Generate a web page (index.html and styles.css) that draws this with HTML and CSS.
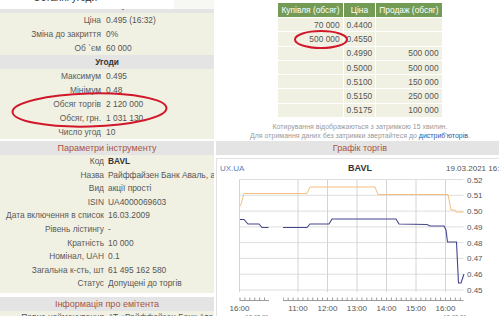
FILE: index.html
```html
<!DOCTYPE html>
<html lang="uk">
<head>
<meta charset="utf-8">
<title>BAVL</title>
<link rel="stylesheet" href="styles.css">
</head>
<body>
<div class="page">
  <div class="left-top">
    <div class="tabbar"><span class="tab"><span class="tab-text">Останні угоди</span></span><span class="tab-rest"></span></div>
    <div class="cuthead"><span class="cuthead-text">Поточні торги</span></div>
    <div class="sec">
      <div class="row"><span class="k">Ціна</span><span class="v">0.495 (16:32)</span></div>
      <div class="row"><span class="k">Зміна до закриття</span><span class="v">0%</span></div>
      <div class="row"><span class="k">Об `єм</span><span class="v">60 000</span></div>
      <div class="subhead">Угоди</div>
      <div class="row"><span class="k">Максимум</span><span class="v">0.495</span></div>
      <div class="row"><span class="k">Мінімум</span><span class="v">0.48</span></div>
      <div class="row"><span class="k">Обсяг торгів</span><span class="v">2 120 000</span></div>
      <div class="row"><span class="k">Обсяг, грн.</span><span class="v">1 031 130</span></div>
      <div class="row"><span class="k">Число угод</span><span class="v">10</span></div>
    </div>
  </div>

  <div class="right-top">
    <table class="book">
      <thead>
        <tr><th class="c-buy">Купівля (обсяг)</th><th class="c-price">Ціна</th><th class="c-sell">Продаж (обсяг)</th></tr>
      </thead>
      <tbody>
        <tr><td class="num">70 000</td><td>0.4400</td><td class="num"></td></tr>
        <tr><td class="num">500 000</td><td>0.4550</td><td class="num"></td></tr>
        <tr><td class="num"></td><td>0.4990</td><td class="num">500 000</td></tr>
        <tr><td class="num"></td><td>0.5000</td><td class="num">500 000</td></tr>
        <tr><td class="num"></td><td>0.5100</td><td class="num">150 000</td></tr>
        <tr><td class="num"></td><td>0.5150</td><td class="num">250 000</td></tr>
        <tr><td class="num"></td><td>0.5175</td><td class="num">100 000</td></tr>
      </tbody>
    </table>
    <p class="note">Котирування відображаються з затримкою 15 хвилин.<br>Для отримання даних без затримки звертайтеся до <a class="link">дистриб'юторів</a>.</p>
  </div>

  <div class="left-bottom">
    <div class="head">Параметри інструменту</div>
    <div class="sec params">
      <div class="row"><span class="k">Код</span><span class="v strong">BAVL</span></div>
      <div class="row"><span class="k">Назва</span><span class="v">Райффайзен Банк Аваль, акції</span></div>
      <div class="row"><span class="k">Вид</span><span class="v">акції прості</span></div>
      <div class="row"><span class="k">ISIN</span><span class="v">UA4000069603</span></div>
      <div class="row"><span class="k">Дата включення в список</span><span class="v">16.03.2009</span></div>
      <div class="row"><span class="k">Рівень лістингу</span><span class="v">-</span></div>
      <div class="row"><span class="k">Кратність</span><span class="v">10 000</span></div>
      <div class="row"><span class="k">Номінал, UAH</span><span class="v">0.1</span></div>
      <div class="row"><span class="k">Загальна к-сть, шт</span><span class="v">61 495 162 580</span></div>
      <div class="row"><span class="k">Статус</span><span class="v">Допущені до торгів</span></div>
    </div>
    <div class="head">Інформація про емітента</div>
    <div class="sec params">
      <div class="row"><span class="k">Повне найменування</span><span class="v">АТ «Райффайзен Банк Аваль»</span></div>
    </div>
  </div>

  <div class="right-bottom">
    <div class="head">Графік торгів</div>
    <div class="chart">
      <svg class="chart-svg" width="288" height="160" viewBox="217 159 288 160" xmlns="http://www.w3.org/2000/svg">
        <defs>
          <pattern id="tk1" patternUnits="userSpaceOnUse" x="239.5" y="0" width="4.9167" height="400">
            <line x1="0.5" y1="297.5" x2="0.5" y2="300" stroke="#9a9a9a" stroke-width="1"/>
          </pattern>
          <pattern id="tk2" patternUnits="userSpaceOnUse" x="297.5" y="0" width="4.9167" height="400">
            <line x1="0.5" y1="297.5" x2="0.5" y2="300" stroke="#9a9a9a" stroke-width="1"/>
          </pattern>
        </defs>
        <text class="t-src" x="220" y="171">UX.UA</text>
        <text class="t-title" x="360" y="171" text-anchor="middle">BAVL</text>
        <text class="t-date" x="446" y="171">19.03.2021 16:52</text>

        <g class="hgrid">
          <line x1="239.5" y1="179.5" x2="463.5" y2="179.5"/>
          <line x1="239.5" y1="195.3" x2="463.5" y2="195.3"/>
          <line x1="239.5" y1="211.1" x2="463.5" y2="211.1"/>
          <line x1="239.5" y1="226.9" x2="463.5" y2="226.9"/>
          <line x1="239.5" y1="242.6" x2="463.5" y2="242.6"/>
          <line x1="239.5" y1="258.4" x2="463.5" y2="258.4"/>
          <line x1="239.5" y1="274.2" x2="463.5" y2="274.2"/>
          <line x1="239.5" y1="290" x2="463.5" y2="290"/>
        </g>
        <g class="vgrid">
          <line x1="239.5" y1="179.5" x2="239.5" y2="292"/>
          <line x1="298" y1="179.5" x2="298" y2="292"/>
          <line x1="327.5" y1="179.5" x2="327.5" y2="292"/>
          <line x1="357" y1="179.5" x2="357" y2="292"/>
          <line x1="386.5" y1="179.5" x2="386.5" y2="292"/>
          <line x1="416" y1="179.5" x2="416" y2="292"/>
          <line x1="445.5" y1="179.5" x2="445.5" y2="292"/>
        </g>

        <g class="ylab">
          <text x="467" y="182.5">0.52</text>
          <text x="467" y="198.3">0.51</text>
          <text x="467" y="214.1">0.50</text>
          <text x="467" y="229.9">0.49</text>
          <text x="467" y="245.6">0.48</text>
          <text x="467" y="261.4">0.47</text>
          <text x="467" y="277.2">0.46</text>
          <text x="467" y="293">0.45</text>
        </g>

        <g class="axis">
          <line x1="239.5" y1="300.5" x2="269" y2="300.5"/>
          <line x1="283" y1="300.5" x2="463.5" y2="300.5"/>
        </g>
        <rect x="239" y="297" width="30" height="3.5" fill="url(#tk1)"/>
        <rect x="283" y="297" width="181" height="3.5" fill="url(#tk2)"/>

        <g class="xlab">
          <text x="239.5" y="310.5">16:00</text>
          <text x="298" y="310.5">11:00</text>
          <text x="327.5" y="310.5">12:00</text>
          <text x="357" y="310.5">13:00</text>
          <text x="386.5" y="310.5">14:00</text>
          <text x="416" y="310.5">15:00</text>
          <text x="445.5" y="310.5">16:00</text>
        </g>
        <g class="dlab">
          <text x="257" y="318.5">18.03.21</text>
          <text x="455" y="318.5">19.03.21</text>
        </g>

        <polyline class="ask" points="240.5,206 244,193.5 307,193.5 310,187 375,187 378,194.5 448,194.5 451,210 455,210 456,212 463.5,212"/>
        <polyline class="bid" points="240,219.5 244,219.5 248,224 259,224 262,227.5 268.5,227.5"/>
        <polyline class="bid" points="283,227.5 307,227.5 310,224 329,224 332,219 396,219 399,224 427,224.5 430,226 444,226 446,230 447.5,242 456.5,242 458.5,283 461,283 464,274"/>
      </svg>
    </div>
  </div>

  <svg class="marks" width="499" height="316" viewBox="0 0 499 316" xmlns="http://www.w3.org/2000/svg">
    <ellipse cx="89.5" cy="110" rx="77" ry="16.5" transform="rotate(-1.5 89.5 110)"/>
    <ellipse cx="321" cy="39.5" rx="26" ry="8.5"/>
  </svg>
</div>
</body>
</html>
```

FILE: styles.css
```css
* { box-sizing: border-box; }

html, body {
  margin: 0;
  padding: 0;
  background: #ffffff;
  overflow: hidden;
}

body {
  width: 499px;
  height: 316px;
  font-family: "Liberation Sans", Arial, sans-serif;
  font-size: 8.4px;
  color: #555555;
}

.page {
  position: relative;
  display: grid;
  grid-template-columns: 214px 288px;
  grid-template-rows: 141px auto;
  column-gap: 2px;
  width: 504px;
}

/* ---------- left column ---------- */
.left-top {
  display: flex;
  flex-direction: column;
}

.tabbar {
  display: flex;
  height: 9px;
  overflow: hidden;
}

.tab {
  width: 174px;
  background: #ffffff;
  overflow: hidden;
}

.tab-text {
  display: block;
  margin: -9px 0 0 33px;
  font-size: 10px;
  line-height: 14px;
  color: #333333;
}

.tab-rest {
  flex: 1;
  background: #f7f7f4;
}

.cuthead {
  height: 4px;
  background: #e4e4e4;
  overflow: hidden;
  text-align: center;
}

.cuthead-text {
  display: block;
  margin-top: -10px;
  line-height: 12px;
  font-weight: bold;
  color: #444444;
}

.sec {
  background: #f1f1e3;
}

.row {
  display: grid;
  grid-template-columns: 101px 1fr;
  column-gap: 5px;
  height: 14px;
  line-height: 14px;
  white-space: nowrap;
}

.k {
  text-align: right;
  color: #5a5a5a;
  overflow: hidden;
}

.v {
  color: #555555;
  overflow: hidden;
}

.strong {
  font-weight: bold;
  color: #333333;
}

.subhead {
  height: 14px;
  line-height: 14px;
  text-align: center;
  font-weight: bold;
  color: #333333;
  background: #e4e4e4;
}

.left-bottom {
  display: flex;
  flex-direction: column;
}

.head {
  height: 14px;
  line-height: 14px;
  text-align: center;
  background: #e4e4e4;
  color: #a9553f;
  font-size: 9px;
  white-space: nowrap;
}

.params {
  padding-bottom: 2px;
  margin-bottom: 4px;
}

.params .row {
  grid-template-columns: 104px 1fr;
  column-gap: 4px;
  height: 13.6px;
  line-height: 13.6px;
}

/* ---------- right column ---------- */
.right-top {
  display: flex;
  flex-direction: column;
  align-items: center;
}

.book {
  margin-top: 2px;
  border-collapse: collapse;
  font-size: 8.4px;
  width: 151px;
}

.book th,
.book td {
  border: 1px solid #ffffff;
  padding: 0 3px;
  white-space: nowrap;
}

.book th {
  height: 15px;
  background: #739b55;
  color: #ffffff;
  font-weight: normal;
  text-align: center;
}

.book td {
  height: 14.3px;
  background: #f1f1e3;
  color: #555555;
  text-align: left;
}

.book td.num {
  text-align: right;
}

.c-buy { width: 61px; }
.c-price { width: 30px; }
.c-sell { width: 60px; }

.note {
  margin: 4px 0 0;
  font-size: 7px;
  line-height: 9px;
  color: #9a9a9a;
  text-align: center;
  white-space: nowrap;
}

.link {
  color: #2b55a8;
}

.right-bottom {
  display: flex;
  flex-direction: column;
}

.chart {
  margin-top: 3px;
  border-top: 1px solid #e2e2e2;
  border-left: 1px solid #e2e2e2;
  height: 160px;
  background: #ffffff;
}

.chart-svg {
  display: block;
  font-family: "Liberation Sans", Arial, sans-serif;
}

.t-src { font-size: 8px; fill: #5b7db3; }
.t-title { font-size: 9px; font-weight: bold; fill: #333333; }
.t-date { font-size: 8px; fill: #555555; }

.hgrid line { stroke: #dedede; stroke-width: 1; }
.vgrid line { stroke: #d4d4d4; stroke-width: 1; }
.axis line { stroke: #9a9a9a; stroke-width: 1; }

.ylab text { font-size: 8px; fill: #555555; }
.xlab text { font-size: 8px; fill: #555555; text-anchor: middle; }
.dlab text { font-size: 6px; fill: #777777; text-anchor: middle; }

.ask { fill: none; stroke: #f3bf7c; stroke-width: 1; }
.bid { fill: none; stroke: #45458e; stroke-width: 1.1; }

/* ---------- annotation overlay ---------- */
.marks {
  position: absolute;
  left: 0;
  top: 0;
  pointer-events: none;
}

.marks ellipse {
  fill: none;
  stroke: #d0182a;
  stroke-width: 2;
}
```
